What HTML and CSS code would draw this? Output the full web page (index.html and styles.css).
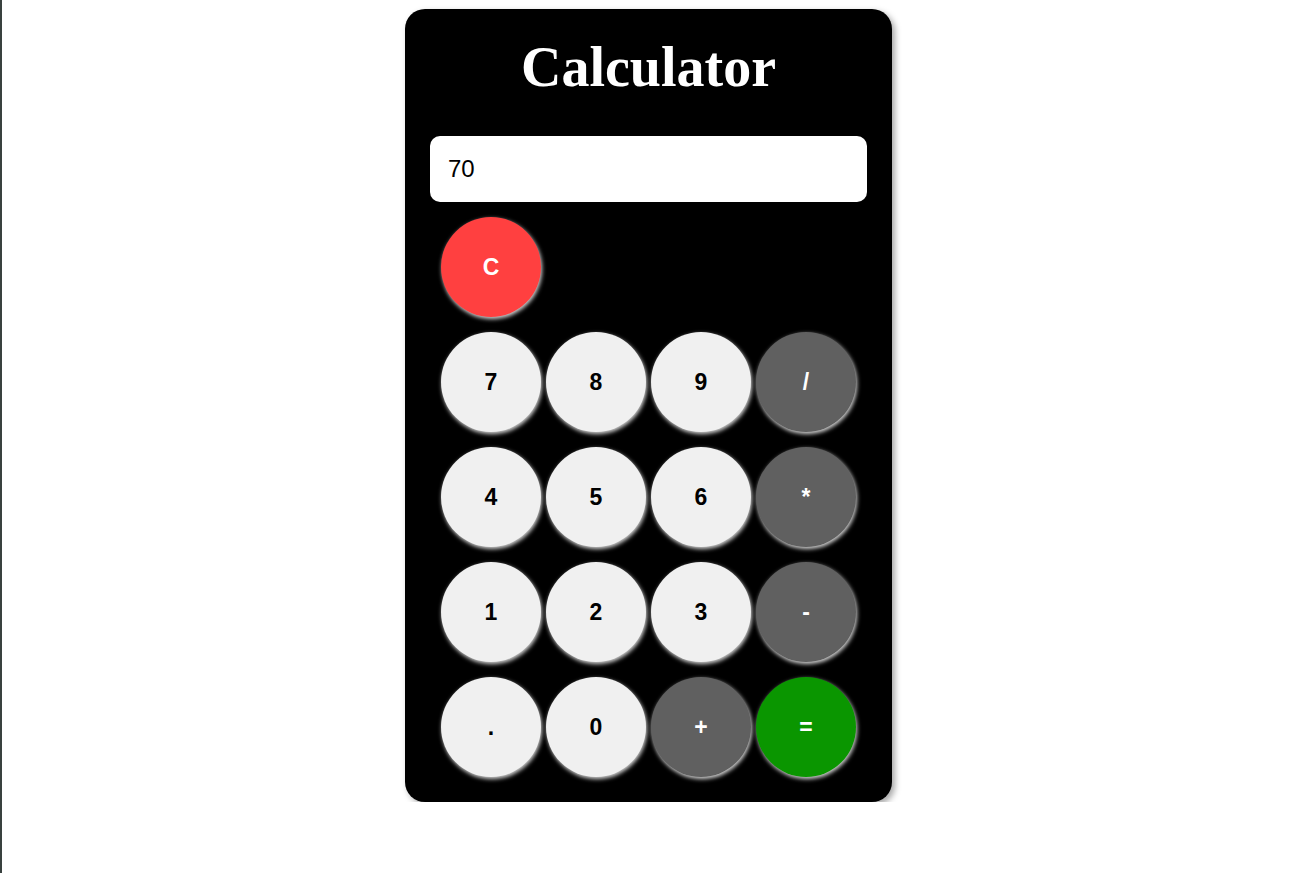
FILE: index.html
```html
<!DOCTYPE html>
<html lang="en">
<head>
<meta charset="utf-8">
<title>Calculator</title>
<link rel="stylesheet" href="styles.css">
</head>
<body>
<div class="page">
  <div class="calculator">
    <h1 class="title">Calculator</h1>
    <input class="display" type="text" value="70" readonly>
    <div class="keys">
      <button class="key key-clear">C</button>
      <button class="key key-num key-row">7</button>
      <button class="key key-num">8</button>
      <button class="key key-num">9</button>
      <button class="key key-op">/</button>
      <button class="key key-num">4</button>
      <button class="key key-num">5</button>
      <button class="key key-num">6</button>
      <button class="key key-op">*</button>
      <button class="key key-num">1</button>
      <button class="key key-num">2</button>
      <button class="key key-num">3</button>
      <button class="key key-op">-</button>
      <button class="key key-num">.</button>
      <button class="key key-num">0</button>
      <button class="key key-op">+</button>
      <button class="key key-eq">=</button>
    </div>
  </div>
</div>
</body>
</html>
```

FILE: styles.css
```css
html {
  min-height: 100%;
  box-sizing: border-box;
  border-left: 2px solid #39413f;
  background: #fff;
}

body {
  margin: 0;
  font-family: "Liberation Sans", Arial, sans-serif;
}

.page {
  display: flex;
  justify-content: center;
  padding: 9px 0 0 2px;
}

.calculator {
  width: 487px;
  box-sizing: border-box;
  padding: 27px 25px 25px;
  background: #000;
  border-radius: 20px;
  box-shadow: 3px 3px 6px rgba(0, 0, 0, 0.35);
}

.title {
  margin: 0 0 38px;
  text-align: center;
  color: #fff;
  font-family: "Liberation Serif", "Times New Roman", serif;
  font-weight: bold;
  font-size: 56px;
  line-height: 62px;
}

.display {
  display: block;
  width: 100%;
  height: 66px;
  box-sizing: border-box;
  margin: 0 0 15px;
  padding: 0 18px;
  border: none;
  border-radius: 10px;
  background: #fff;
  color: #000;
  font-family: "Liberation Sans", Arial, sans-serif;
  font-size: 24px;
  outline: none;
}

.keys {
  display: grid;
  grid-template-columns: repeat(4, 100px);
  grid-auto-rows: 100px;
  column-gap: 5px;
  row-gap: 15px;
  justify-content: center;
}

.key {
  width: 100px;
  height: 100px;
  padding: 0;
  border: none;
  border-radius: 50%;
  font-family: "Liberation Sans", Arial, sans-serif;
  font-weight: bold;
  font-size: 23px;
  cursor: pointer;
  box-shadow: 1px 2px 4px rgba(255, 255, 255, 0.85);
}

.key-clear {
  grid-column: 1;
  background: #ff4040;
  color: #fff;
}

.key-row {
  grid-column: 1;
}

.key-num {
  background: #f0f0f0;
  color: #000;
}

.key-op {
  background: #606060;
  color: #fff;
}

.key-eq {
  background: #0a9600;
  color: #fff;
}
```
